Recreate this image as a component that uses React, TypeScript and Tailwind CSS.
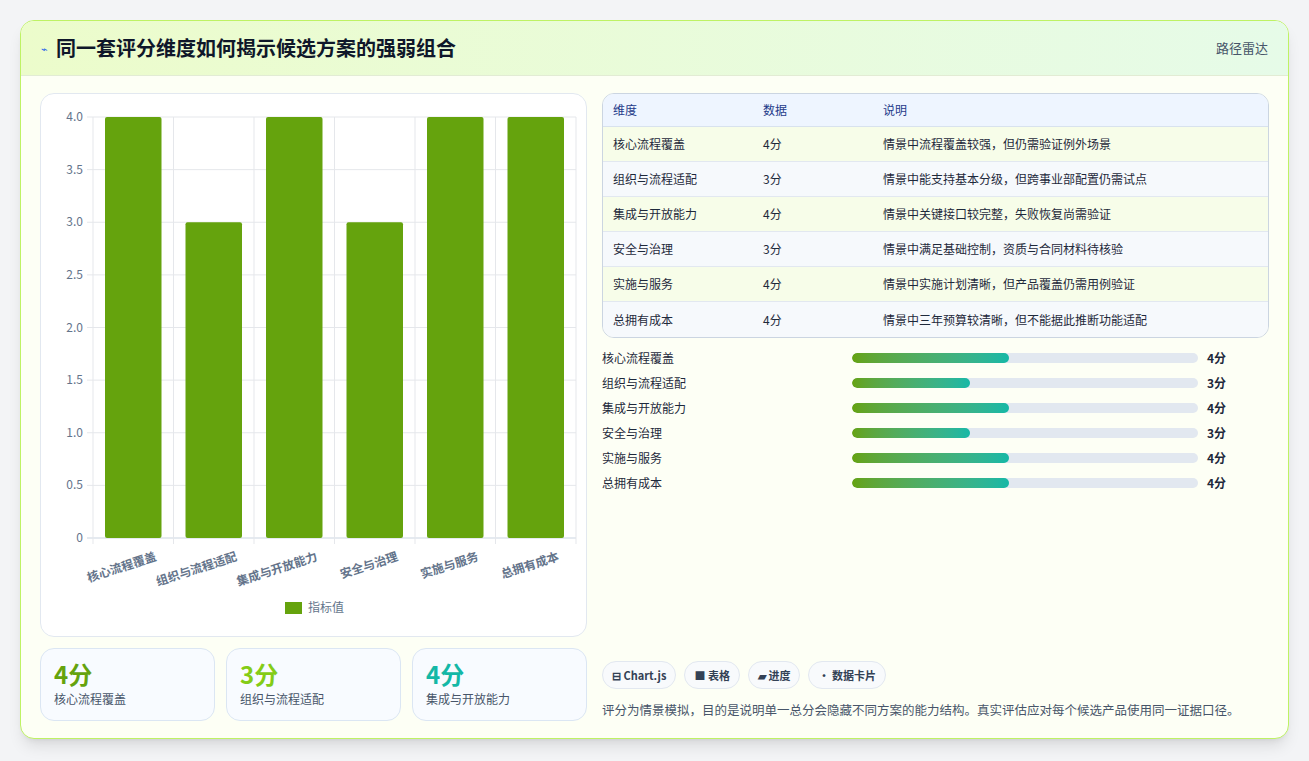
import React from "react";

const dims = ["核心流程覆盖", "组织与流程适配", "集成与开放能力", "安全与治理", "实施与服务", "总拥有成本"];
const vals = [4, 3, 4, 3, 4, 4];
const notes = [
  "情景中流程覆盖较强，但仍需验证例外场景",
  "情景中能支持基本分级，但跨事业部配置仍需试点",
  "情景中关键接口较完整，失败恢复尚需验证",
  "情景中满足基础控制，资质与合同材料待核验",
  "情景中实施计划清晰，但产品覆盖仍需用例验证",
  "情景中三年预算较清晰，但不能据此推断功能适配",
];

function Chart() {
  const x0 = 52, x1 = 535, yTop = 23, yBot = 444;
  const cw = (x1 - x0) / 6;
  const ticks = [0, 0.5, 1, 1.5, 2, 2.5, 3, 3.5, 4];
  const y = (v: number) => yBot - (v / 4) * (yBot - yTop);
  return (
    <svg width="546" height="543" className="block">
      {ticks.map((t) => (
        <g key={t}>
          <line x1={x0 - 6} x2={x1} y1={y(t)} y2={y(t)} stroke={t === 0 ? "#cbd5e1" : "#e5e7eb"} />
          <text x={x0 - 10} y={y(t) + 4} textAnchor="end" fontSize="12" fill="#64748b">{t === 0 ? "0" : t.toFixed(1)}</text>
        </g>
      ))}
      {Array.from({ length: 7 }).map((_, i) => (
        <line key={i} x1={x0 + i * cw} x2={x0 + i * cw} y1={yTop} y2={yBot + 6} stroke="#e5e7eb" />
      ))}
      {vals.map((v, i) => (
        <rect key={i} x={x0 + i * cw + 12} y={y(v)} width={cw - 24} height={yBot - y(v)} fill="#65a30d" rx="2" />
      ))}
      {dims.map((d, i) => (
        <text key={d} x={x0 + i * cw + cw / 2 + 24} y={yBot + 22} textAnchor="end" fontSize="12" fontWeight="600" fill="#64748b" transform={`rotate(-18 ${x0 + i * cw + cw / 2 + 24} ${yBot + 22})`}>{d}</text>
      ))}
      <rect x="244" y="508" width="17" height="12" fill="#65a30d" />
      <text x="267" y="518" fontSize="12" fill="#64748b">指标值</text>
    </svg>
  );
}

export default function App() {
  return (
    <div className="w-[1309px] h-[761px] bg-[#f3f4f6] p-[20px] pb-[22px]" style={{ fontFamily: '"Noto Sans CJK SC", "Noto Sans", sans-serif' }}>
      <div className="h-[719px] rounded-[14px] border border-[#bef264] bg-[#fdfff5] shadow-lg overflow-hidden flex flex-col">
        <div className="h-[55px] shrink-0 flex items-center justify-between px-[20px] border-b border-[#e2ecd4] bg-gradient-to-r from-[#ecfccb] to-[#e6fbe8]">
          <div className="flex items-center gap-[8px]">
            <span className="text-[#2563eb] text-[11px]">⌁</span>
            <span className="text-[20px] font-bold text-[#0f172a]">同一套评分维度如何揭示候选方案的强弱组合</span>
          </div>
          <span className="text-[13px] text-[#475569]">路径雷达</span>
        </div>
        <div className="flex-1 flex gap-[15px] px-[19px] pt-[17px]">
          <div className="w-[547px] flex flex-col gap-[11px]">
            <div className="h-[544px] rounded-[14px] border border-[#e2e8f0] bg-white overflow-hidden"><Chart /></div>
            <div className="grid grid-cols-3 gap-[11px]">
              {[["4分", "text-[#65a30d]", dims[0]], ["3分", "text-[#84cc16]", dims[1]], ["4分", "text-[#14b8a6]", dims[2]]].map(([v, c, l]) => (
                <div key={l} className="h-[73px] rounded-[14px] border border-[#dbe6f3] bg-[#f8fbff] px-[13px] pt-[10px]">
                  <div className={`text-[24px] leading-[30px] font-bold ${c}`}>{v}</div>
                  <div className="text-[12px] text-[#475569] mt-[1px]">{l}</div>
                </div>
              ))}
            </div>
          </div>
          <div className="w-[668px] flex flex-col">
            <div className="rounded-[12px] border border-[#cbd5e1] overflow-hidden text-[12px]">
              <div className="h-[33px] flex items-center bg-[#eef5ff] text-[#1e3a8a] border-b border-[#d8e2ee]">
                <div className="w-[160px] pl-[10px]">维度</div><div className="w-[120px]">数据</div><div>说明</div>
              </div>
              {dims.map((d, i) => (
                <div key={d} className={`h-[35px] flex items-center text-[#1e293b] ${i < 5 ? "border-b border-[#e2e8f0]" : ""} ${i % 2 ? "bg-[#f6f9fc]" : "bg-[#f7fde9]"}`}>
                  <div className="w-[160px] pl-[10px]">{d}</div><div className="w-[120px]">{vals[i]}分</div><div>{notes[i]}</div>
                </div>
              ))}
            </div>
            <div className="mt-[7px] flex flex-col">
              {dims.map((d, i) => (
                <div key={d} className="h-[25px] flex items-center text-[12px]">
                  <div className="w-[250px] text-[#1e293b]">{d}</div>
                  <div className="w-[346px] h-[10px] rounded-full bg-[#e2e8f0] overflow-hidden">
                    <div className="h-full rounded-full bg-gradient-to-r from-[#65a30d] to-[#14b8a6]" style={{ width: vals[i] === 4 ? "45.4%" : "34.1%" }} />
                  </div>
                  <div className="ml-[9px] font-bold text-[#1e293b]">{vals[i]}分</div>
                </div>
              ))}
            </div>
            <div className="mt-auto mb-[18px]">
              <div className="flex gap-[8px]">
                {["⊟ Chart.js", "■ 表格", "▰ 进度", "• 数据卡片"].map((c) => (
                  <span key={c} className="h-[28px] px-[9px] flex items-center rounded-full border border-[#e2e8f0] bg-[#f8fafc] text-[11px] font-bold text-[#334155]">{c}</span>
                ))}
              </div>
              <div className="mt-[12px] text-[12.5px] text-[#475569]">评分为情景模拟，目的是说明单一总分会隐藏不同方案的能力结构。真实评估应对每个候选产品使用同一证据口径。</div>
            </div>
          </div>
        </div>
      </div>
    </div>
  );
}
